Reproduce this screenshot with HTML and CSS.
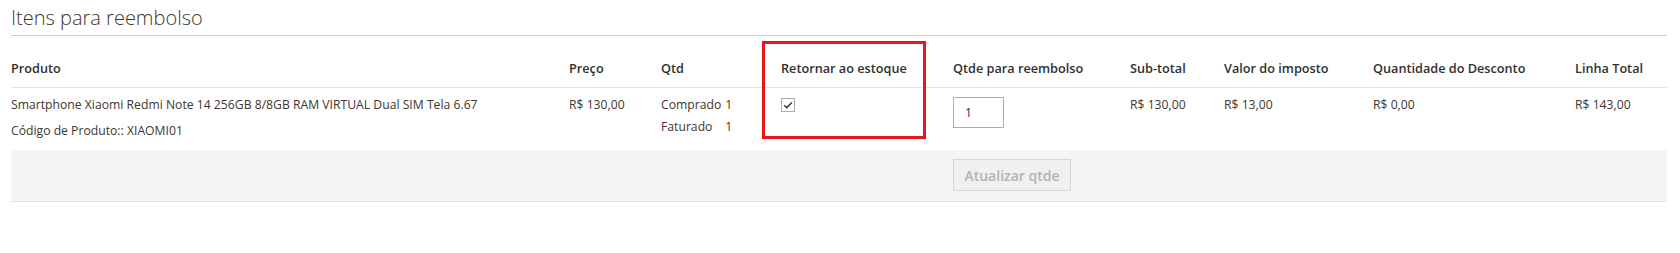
FILE: index.html
```html
<!DOCTYPE html>
<html lang="pt-BR">
<head>
    <meta charset="UTF-8">
    <meta name="viewport" content="width=device-width, initial-scale=1.0">
    <title>Itens para reembolso</title>
    <link rel="stylesheet" href="styles.css">
</head>
<body>
    <section class="refund-section">
        <h2 class="section-title">Itens para reembolso</h2>

        <div class="table-wrap">
            <table class="items-table">
                <colgroup>
                    <col class="col-product">
                    <col class="col-price">
                    <col class="col-qty">
                    <col class="col-return">
                    <col class="col-refund">
                    <col class="col-subtotal">
                    <col class="col-tax">
                    <col class="col-discount">
                    <col class="col-total">
                </colgroup>
                <thead>
                    <tr>
                        <th>Produto</th>
                        <th>Preço</th>
                        <th>Qtd</th>
                        <th>Retornar ao estoque</th>
                        <th>Qtde para reembolso</th>
                        <th>Sub-total</th>
                        <th>Valor do imposto</th>
                        <th>Quantidade do Desconto</th>
                        <th>Linha Total</th>
                    </tr>
                </thead>
                <tbody>
                    <tr>
                        <td>
                            <div class="product-name">Smartphone Xiaomi Redmi Note 14 256GB 8/8GB RAM VIRTUAL Dual SIM Tela 6.67</div>
                            <div class="product-sku">Código de Produto:: XIAOMI01</div>
                        </td>
                        <td>R$ 130,00</td>
                        <td>
                            <table class="qty-table">
                                <tr><th>Comprado</th><td>1</td></tr>
                                <tr><th>Faturado</th><td>1</td></tr>
                            </table>
                        </td>
                        <td>
                            <label class="checkbox">
                                <input type="checkbox" checked>
                                <span class="checkbox-box">
                                    <svg width="10" height="8" viewBox="0 0 10 8"><path d="M1.2 4.2 L3.8 6.6 L8.8 1.4" fill="none" stroke="#41362f" stroke-width="1.5"/></svg>
                                </span>
                            </label>
                        </td>
                        <td><input type="text" class="qty-input" value="1"></td>
                        <td>R$ 130,00</td>
                        <td>R$ 13,00</td>
                        <td>R$ 0,00</td>
                        <td>R$ 143,00</td>
                    </tr>
                </tbody>
                <tfoot>
                    <tr>
                        <td colspan="4"></td>
                        <td colspan="5"><button class="update-button" disabled>Atualizar qtde</button></td>
                    </tr>
                </tfoot>
            </table>

            <!-- highlight around the "Retornar ao estoque" column -->
            <div class="highlight"></div>
        </div>
    </section>
</body>
</html>
```

FILE: styles.css
```css
* {
    margin: 0;
    padding: 0;
    box-sizing: border-box;
}

body {
    font-family: 'Open Sans', 'Liberation Sans', sans-serif;
    color: #303030;
    background: #ffffff;
    font-size: 12.2px;
}

.refund-section {
    width: 1656px;
    margin-left: 11px;
}

.section-title {
    font-size: 20px;
    font-weight: 300;
    line-height: 24px;
    color: #41362f;
    padding-top: 6px;
    padding-bottom: 5px;
    border-bottom: 1px solid #cccccc;
}

.table-wrap {
    position: relative;
}

.items-table {
    width: 100%;
    table-layout: fixed;
    border-collapse: collapse;
}

.col-product { width: 558px; }
.col-price { width: 92px; }
.col-qty { width: 120px; }
.col-return { width: 172px; }
.col-refund { width: 177px; }
.col-subtotal { width: 94px; }
.col-tax { width: 149px; }
.col-discount { width: 202px; }
.col-total { width: 92px; }

.items-table > thead > tr > th {
    text-align: left;
    font-size: 12.7px;
    font-weight: 600;
    line-height: 18px;
    padding: 23px 0 10px;
    border-bottom: 1px solid #e3e3e3;
    white-space: nowrap;
}

.items-table > tbody > tr > td {
    vertical-align: top;
    line-height: 18px;
    padding: 8px 0 10px;
    color: #41362f;
}

.product-sku {
    margin-top: 8px;
}

.qty-table {
    border-collapse: collapse;
}

.qty-table th {
    font-weight: 400;
    text-align: left;
    padding: 0 4px 4px 0;
    line-height: 18px;
}

.qty-table td {
    padding: 0 0 4px 0;
    line-height: 18px;
}

.checkbox {
    display: inline-block;
    margin-top: 2px;
}

.checkbox input {
    display: none;
}

.checkbox-box {
    display: flex;
    align-items: center;
    justify-content: center;
    width: 14px;
    height: 14px;
    border: 1px solid #adadad;
    background: #ffffff;
}

.qty-input {
    width: 51px;
    height: 31px;
    border: 1px solid #adadad;
    padding: 0 11px;
    font-family: inherit;
    font-size: 12.2px;
    color: #303030;
    margin-top: 1px;
}

.items-table > tfoot > tr > td {
    background: #f5f5f5;
    padding: 9px 0;
    border-bottom: 1px solid #e3e3e3;
    height: 51px;
}

.update-button {
    width: 118px;
    height: 32px;
    background: #f0f0f0;
    border: 1px solid #d6d6d6;
    color: #b3b3b3;
    font-family: inherit;
    font-size: 14px;
    font-weight: 600;
    cursor: not-allowed;
}

.highlight {
    position: absolute;
    left: 751px;
    top: 5px;
    width: 164px;
    height: 98px;
    border: 3px solid #e5161d;
    pointer-events: none;
}
```
